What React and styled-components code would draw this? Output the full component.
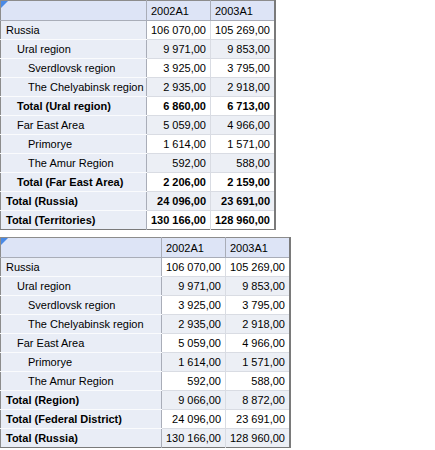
import React from "react";
import styled, { createGlobalStyle } from "styled-components";

const GlobalStyle = createGlobalStyle`
  html, body {
    margin: 0;
    padding: 0;
    background: #ffffff;
  }
  body {
    font-family: Tahoma, "Liberation Sans", "DejaVu Sans", sans-serif;
    font-size: 11px;
    color: #000;
  }
`;

const territories = [
  { name: "Russia", level: 0, a: "106 070,00", b: "105 269,00" },
  { name: "Ural region", level: 1, a: "9 971,00", b: "9 853,00" },
  { name: "Sverdlovsk region", level: 2, a: "3 925,00", b: "3 795,00" },
  { name: "The Chelyabinsk region", level: 2, a: "2 935,00", b: "2 918,00" },
  { name: "Total (Ural region)", level: 1, a: "6 860,00", b: "6 713,00", total: true },
  { name: "Far East Area", level: 1, a: "5 059,00", b: "4 966,00" },
  { name: "Primorye", level: 2, a: "1 614,00", b: "1 571,00" },
  { name: "The Amur Region", level: 2, a: "592,00", b: "588,00" },
  { name: "Total (Far East Area)", level: 1, a: "2 206,00", b: "2 159,00", total: true },
  { name: "Total (Russia)", level: 0, a: "24 096,00", b: "23 691,00", total: true },
  { name: "Total (Territories)", level: 0, a: "130 166,00", b: "128 960,00", total: true },
];

const districts = [
  { name: "Russia", level: 0, a: "106 070,00", b: "105 269,00" },
  { name: "Ural region", level: 1, a: "9 971,00", b: "9 853,00" },
  { name: "Sverdlovsk region", level: 2, a: "3 925,00", b: "3 795,00" },
  { name: "The Chelyabinsk region", level: 2, a: "2 935,00", b: "2 918,00" },
  { name: "Far East Area", level: 1, a: "5 059,00", b: "4 966,00" },
  { name: "Primorye", level: 2, a: "1 614,00", b: "1 571,00" },
  { name: "The Amur Region", level: 2, a: "592,00", b: "588,00" },
  { name: "Total (Region)", level: 0, a: "9 066,00", b: "8 872,00", label: true },
  { name: "Total (Federal District)", level: 0, a: "24 096,00", b: "23 691,00", label: true },
  { name: "Total (Russia)", level: 0, a: "130 166,00", b: "128 960,00", label: true },
];

const Page = styled.div`
  display: flex;
  flex-direction: column;
  align-items: flex-start;
  gap: 7px;
`;

const Grid = styled.table`
  border-collapse: collapse;
  table-layout: fixed;
  border: 1px solid #8c8c8c;
  border-right: 2px solid #7a7a7a;
  border-bottom: 1px solid #7a7a7a;
`;

const Corner = styled.th`
  width: ${(p) => p.$width}px;
  height: 19px;
  padding: 0;
  vertical-align: top;
  background: #dde4f6;
  border-right: 1px solid #a9adb8;
  border-bottom: 1px solid #a9adb8;
`;

const CornerBox = styled.div`
  position: relative;
  height: 19px;
`;

// little blue triangle in the top-left corner of the grid
const CornerMark = styled.svg`
  position: absolute;
  top: 0;
  left: 0;
  display: block;
`;

const HeadCell = styled.th`
  width: 59px;
  height: 19px;
  padding: 0 0 0 4px;
  text-align: left;
  font-weight: normal;
  background: #dde4f6;
  border-right: 1px solid #a9adb8;
  border-bottom: 1px solid #a9adb8;

  &:last-child {
    border-right: none;
  }
`;

const RowHead = styled.td`
  height: 18px;
  padding: 0 0 0 ${(p) => 5 + p.$level * 11}px;
  white-space: nowrap;
  overflow: hidden;
  background: #e9edf6;
  border-right: 1px solid #a9adb8;
  border-bottom: 1px solid #fafbfd;
  font-weight: ${(p) => (p.$bold ? "bold" : "normal")};
`;

const Value = styled.td`
  height: 18px;
  padding: 0 4px 0 0;
  text-align: right;
  white-space: nowrap;
  background: ${(p) => (p.$shade ? "#eceff5" : "#ffffff")};
  border-right: 1px solid #d9dce3;
  border-bottom: 1px solid #d9dce3;
  font-weight: ${(p) => (p.$bold ? "bold" : "normal")};

  &:last-child {
    border-right: none;
  }
`;

const Row = styled.tr`
  &:last-child td {
    border-bottom: none;
  }
`;

const PivotTable = ({ rows, headWidth }) => (
  <Grid>
    <thead>
      <tr>
        <Corner $width={headWidth}>
          <CornerBox>
            <CornerMark width="7" height="7" viewBox="0 0 7 7">
              <polygon points="0,0 7,0 0,7" fill="#4a8ae6" />
            </CornerMark>
          </CornerBox>
        </Corner>
        <HeadCell>2002A1</HeadCell>
        <HeadCell>2003A1</HeadCell>
      </tr>
    </thead>
    <tbody>
      {rows.map((r, i) => (
        <Row key={r.name + i}>
          <RowHead $level={r.level} $bold={r.total || r.label}>
            {r.name}
          </RowHead>
          <Value $shade={i % 2 === 1} $bold={r.total}>
            {r.a}
          </Value>
          <Value $shade={i % 2 === 1} $bold={r.total}>
            {r.b}
          </Value>
        </Row>
      ))}
    </tbody>
  </Grid>
);

export default function App() {
  return (
    <>
      <GlobalStyle />
      <Page>
        <PivotTable rows={territories} headWidth={145} />
        <PivotTable rows={districts} headWidth={160} />
      </Page>
    </>
  );
}
